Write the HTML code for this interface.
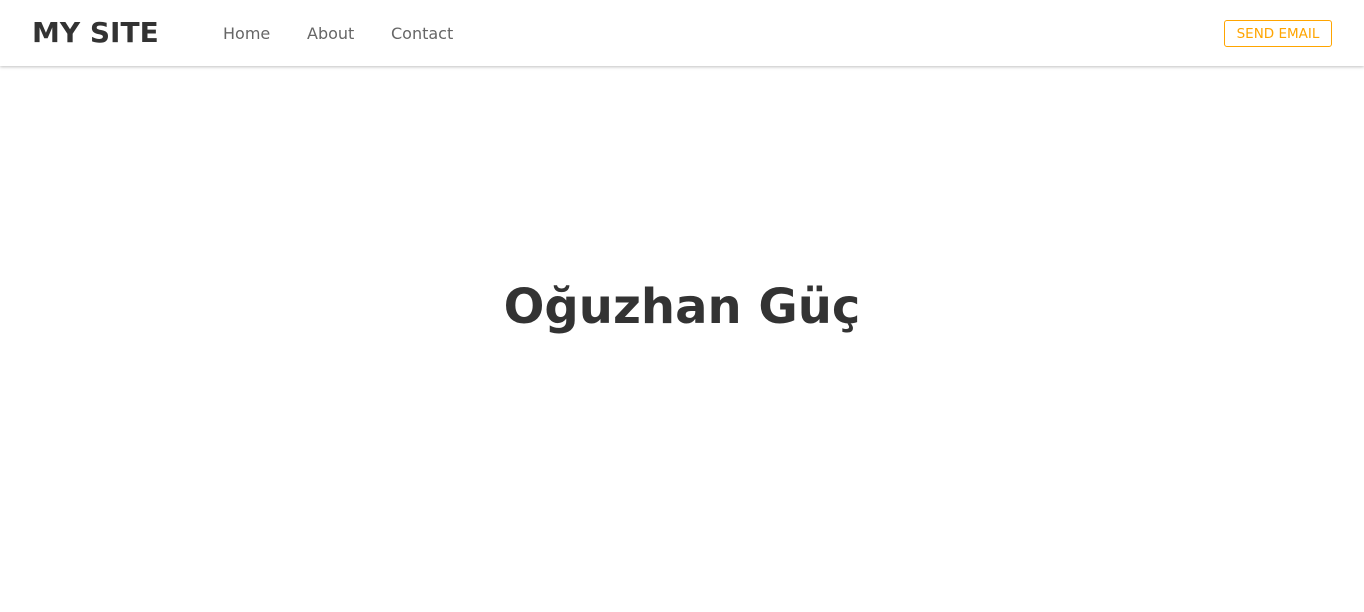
<!DOCTYPE html>
<html><head><meta charset="utf-8"><style>
body{margin:0;background:#fff;font-family:"DejaVu Sans",sans-serif;width:1364px;height:612px;overflow:hidden}
header{height:66px;position:relative;box-shadow:0 1px 3px rgba(0,0,0,.25);background:#fff}
.logo{position:absolute;left:32px;top:14px;font-size:28px;font-weight:bold;color:#333;line-height:38px}
nav a{position:absolute;top:23px;font-size:16px;color:#666;line-height:22px;text-decoration:none}
.btn{position:absolute;left:1224px;top:20px;width:106px;height:25px;border:1px solid #ffa500;border-radius:3px;color:#ffa500;font-size:13.5px;text-align:center;line-height:26px}
h1{position:absolute;left:0;right:0;top:279px;margin:0;text-align:center;font-size:48px;color:#333;line-height:56px}
</style></head><body>
<header><div class="logo">MY SITE</div>
<nav><a style="left:223px">Home</a><a style="left:307px">About</a><a style="left:391px">Contact</a></nav>
<div class="btn">SEND EMAIL</div></header>
<h1>Oğuzhan Güç</h1>
</body></html>
